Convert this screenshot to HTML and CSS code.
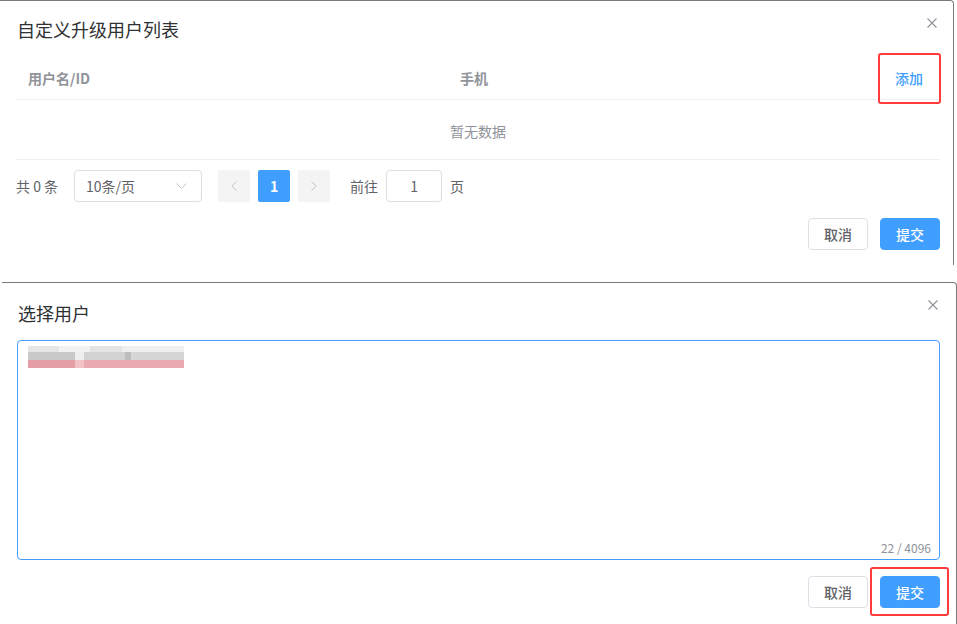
FILE: index.html
```html
<!DOCTYPE html>
<html lang="zh-CN">
<head>
<meta charset="utf-8">
<title>自定义升级用户列表</title>
<link rel="stylesheet" href="styles.css">
</head>
<body>
<div class="panel panel-top">
  <div class="dlg-header">
    <span class="dlg-title">自定义升级用户列表</span>
    <span class="close"><svg width="10" height="10" viewBox="0 0 10 10"><path d="M0.5 0.5L9.5 9.5M9.5 0.5L0.5 9.5" stroke="#909399" stroke-width="1.1" fill="none"/></svg></span>
  </div>
  <div class="table">
    <div class="thead">
      <div class="th th-name">用户名/ID</div>
      <div class="th th-phone">手机</div>
      <div class="th th-op"><span class="link mark mark-add">添加</span></div>
    </div>
    <div class="empty">暂无数据</div>
  </div>
  <div class="pager">
    <span class="total">共 0 条</span>
    <div class="select">
      <span>10条/页</span>
      <svg width="11" height="6" viewBox="0 0 11 6"><path d="M0.5 0.5L5.5 5.5L10.5 0.5" stroke="#c0c4cc" stroke-width="1" fill="none"/></svg>
    </div>
    <div class="pages">
      <span class="pbtn"><svg width="6" height="10" viewBox="0 0 6 10"><path d="M5.5 0.5L0.8 5L5.5 9.5" stroke="#c0c4cc" stroke-width="1" fill="none"/></svg></span>
      <span class="pbtn active">1</span>
      <span class="pbtn"><svg width="6" height="10" viewBox="0 0 6 10"><path d="M0.5 0.5L5.2 5L0.5 9.5" stroke="#c0c4cc" stroke-width="1" fill="none"/></svg></span>
    </div>
    <span class="jump">前往</span>
    <div class="jump-input">1</div>
    <span class="jump-unit">页</span>
  </div>
  <div class="dlg-footer">
    <span class="btn">取消</span>
    <span class="btn primary">提交</span>
  </div>
</div>

<div class="panel panel-bottom">
  <div class="dlg-header">
    <span class="dlg-title">选择用户</span>
    <span class="close"><svg width="10" height="10" viewBox="0 0 10 10"><path d="M0.5 0.5L9.5 9.5M9.5 0.5L0.5 9.5" stroke="#909399" stroke-width="1.1" fill="none"/></svg></span>
  </div>
  <div class="textarea">
    <div class="blurred">
      <div class="bl bl1"></div>
      <div class="bl bl2"></div>
      <div class="bl bl3"></div>
    </div>
    <span class="count">22 / 4096</span>
  </div>
  <div class="dlg-footer footer-bottom">
    <span class="btn">取消</span>
    <span class="btn primary mark mark-submit">提交</span>
  </div>
</div>
</body>
</html>
```
FILE: styles.css
```css
* { box-sizing: border-box; }
html, body { margin: 0; padding: 0; background: #fff; }
body {
  width: 957px;
  height: 624px;
  overflow: hidden;
  font-family: "Noto Sans CJK SC", "Noto Sans", "Liberation Sans", sans-serif;
  color: #606266;
  font-size: 14px;
}

.panel {
  background: #fff;
  border-top: 1px solid #7a7a7a;
  border-right: 1px solid #7a7a7a;
  border-top-right-radius: 4px;
}
.panel-top {
  width: 954px;
  height: 265px;
  padding: 0 13px 0 16px;
}
.panel-bottom {
  margin-left: 2px;
  margin-top: 17px;
  width: 955px;
  height: 345px;
  padding: 0 16px 0 15px;
}

.dlg-header {
  display: flex;
  justify-content: space-between;
  align-items: flex-start;
  padding-top: 16px;
  height: 41px;
}
.panel-bottom .dlg-header { padding-top: 18px; height: 42px; }
.dlg-title {
  font-size: 18px;
  line-height: 24px;
  color: #303133;
  padding-left: 1px;
}
.close {
  display: flex;
  margin-top: 1px;
  margin-right: 3px;
}
.panel-bottom .close { margin-top: -1px; margin-right: 2px; }

.table { margin-top: 14px; }
.thead {
  display: grid;
  grid-template-columns: 432px 1fr 60px;
  height: 44px;
  border-bottom: 1px solid #ebeef5;
  align-items: center;
}
.th {
  font-size: 14px;
  font-weight: 700;
  color: #909399;
  padding-left: 12px;
}
.th-name { padding-left: 12px; }
.th-op { padding-left: 0; text-align: center; padding-right: 2px; }
.link { color: #409eff; font-weight: 500; }

.mark { position: relative; }
.mark::after {
  content: "";
  position: absolute;
  border: 2px solid #ff3b3b;
  border-radius: 3px;
}
.mark-add::after { left: -17px; right: -18px; top: -15px; bottom: -16px; }
.mark-submit::after { left: -11px; right: -10px; top: -10px; bottom: -9px; }

.empty {
  height: 60px;
  border-bottom: 1px solid #ebeef5;
  display: flex;
  align-items: center;
  justify-content: center;
  padding-top: 3px;
  color: #909399;
  font-size: 14px;
}

.pager {
  margin-top: 10px;
  height: 32px;
  display: flex;
  align-items: center;
  font-size: 14px;
  color: #606266;
}
.total { margin-right: 16px; }
.select {
  width: 128px;
  height: 32px;
  border: 1px solid #dcdfe6;
  border-radius: 4px;
  display: flex;
  align-items: center;
  justify-content: space-between;
  padding: 0 14px 0 11px;
  color: #606266;
}
.pages {
  display: flex;
  gap: 8px;
  margin-left: 16px;
}
.pbtn {
  width: 32px;
  height: 32px;
  background: #f4f4f5;
  border-radius: 2px;
  display: flex;
  align-items: center;
  justify-content: center;
}
.pbtn.active {
  background: #409eff;
  color: #fff;
  font-weight: 700;
  font-size: 14px;
}
.jump { margin-left: 20px; }
.jump-input {
  width: 56px;
  height: 32px;
  margin-left: 8px;
  border: 1px solid #dcdfe6;
  border-radius: 4px;
  display: flex;
  align-items: center;
  justify-content: center;
}
.jump-unit { margin-left: 8px; }

.dlg-footer {
  display: flex;
  justify-content: flex-end;
  gap: 12px;
  margin-top: 16px;
}
.footer-bottom { margin-top: 16px; }
.btn {
  width: 60px;
  height: 32px;
  border: 1px solid #dcdfe6;
  border-radius: 4px;
  display: flex;
  align-items: center;
  justify-content: center;
  font-size: 14px;
  font-weight: 500;
  color: #606266;
  background: #fff;
}
.btn.primary {
  background: #409eff;
  border-color: #409eff;
  color: #fff;
}

.textarea {
  margin-top: 15px;
  height: 220px;
  border: 1px solid #409eff;
  border-radius: 4px;
  display: flex;
  flex-direction: column;
  padding: 5px 8px 1px 10px;
}
.blurred {
  width: 156px;
  filter: blur(0.6px);
}
.bl { height: 7px; }
.bl1 { height: 6px; background: linear-gradient(90deg, #e6e6e6 0 20%, #f2f2f2 20% 40%, #e4e4e4 40% 60%, #efefef 60% 100%); }
.bl2 { height: 8px; background: linear-gradient(90deg, #c9c9c9 0 30%, #eeeeee 30% 36%, #d2d2d2 36% 62%, #bdbdbd 62% 66%, #d6d6d6 66% 100%); }
.bl3 { height: 8px; background: linear-gradient(90deg, #e59ea5 0 30%, #f1c3c7 30% 36%, #e8aab0 36% 100%); }
.count {
  margin-top: auto;
  align-self: flex-end;
  font-size: 12px;
  line-height: 20px;
  color: #909399;
}
```
